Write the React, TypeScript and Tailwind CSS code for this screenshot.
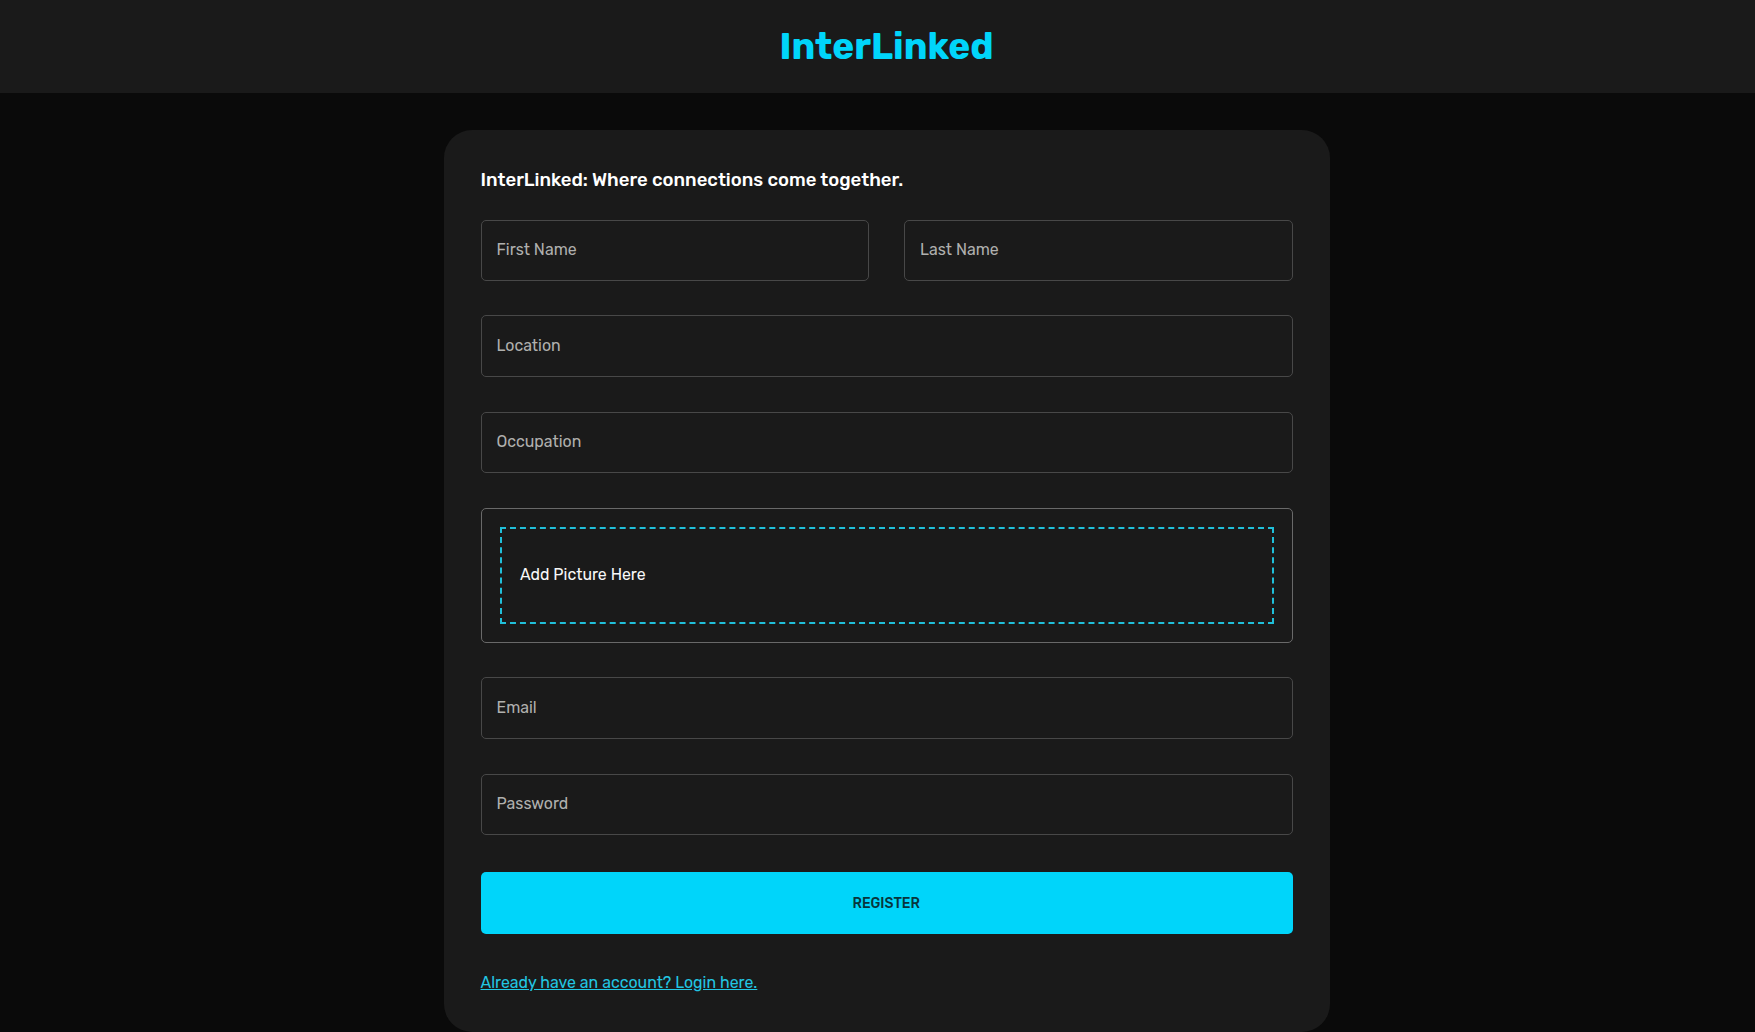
type FieldProps = { label: string; className: string };

function Field({ label, className }: FieldProps) {
  return (
    <label className={`flex items-center rounded-[5px] border border-[#484848] px-[15px] pb-px text-[#b0b0ae] ${className}`}>
      <span className="whitespace-nowrap">{label}</span>
    </label>
  );
}

export default function App() {
  return (
    <div className="flex h-[1032px] flex-col items-center overflow-hidden bg-[#0a0a0a] font-['Rubik','Roboto',sans-serif] text-[15.9px] leading-6 text-[#f8f8f8]">
      <header className="flex h-[93px] w-full shrink-0 items-center justify-center bg-[#1a1a1a] pb-px pl-[18px]">
        <h1 className="text-[37px] leading-none font-bold text-[#00d5fa]">InterLinked</h1>
      </header>
      <main className="ml-[19px] mt-[37px] h-[902px] w-[886px] shrink-0 rounded-[28px] bg-[#1a1a1a] pl-[36.5px] pr-[37px] pt-[38px]">
        <h2 className="h-[24px] text-[18.55px] leading-6 font-medium whitespace-nowrap text-white">
          InterLinked: Where connections come together.
        </h2>
        <form className="mt-[28px] flex flex-col">
          <div className="flex justify-between">
            <Field label="First Name" className="h-[61px] w-[388px]" />
            <Field label="Last Name" className="h-[61px] w-[389px]" />
          </div>
          <Field label="Location" className="mt-[34px] h-[62px]" />
          <Field label="Occupation" className="mt-[35px] h-[61px]" />
          <div className="mt-[35px] h-[135px] rounded-[5px] border border-[#696969] px-[18px] py-[18px]">
            <div className="flex h-[97px] items-center border-2 border-dashed border-[#20bfd9] pb-px pl-[18.5px]">
              <span className="whitespace-nowrap">Add Picture Here</span>
            </div>
          </div>
          <Field label="Email" className="mt-[34px] h-[62px]" />
          <Field label="Password" className="mt-[35px] h-[61px]" />
          <button type="button" className="mt-[37px] h-[62px] rounded-[5px] bg-[#00d5fa] pt-[2px] pr-px text-[14px] font-medium text-[#08353c]">
            <span>REGISTER</span>
          </button>
          <a className="mt-[36.5px] self-start whitespace-nowrap text-[#22c6e2] underline">
            Already have an account? Login here.
          </a>
        </form>
      </main>
    </div>
  );
}
